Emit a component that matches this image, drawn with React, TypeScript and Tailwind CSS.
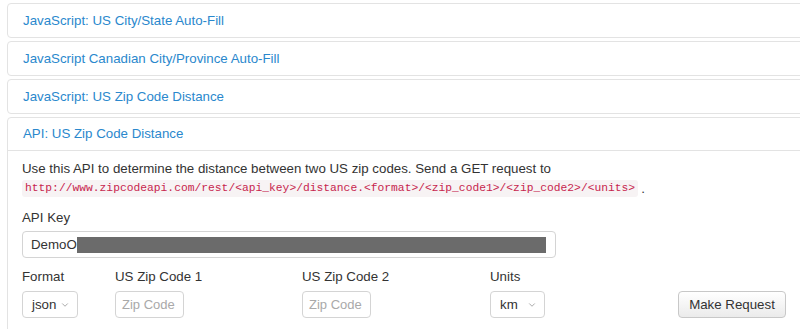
import { ChevronDown } from 'lucide-react'

const LINKS = [
  'JavaScript: US City/State Auto-Fill',
  'JavaScript Canadian City/Province Auto-Fill',
  'JavaScript: US Zip Code Distance',
]

function Select({ value, width }: { value: string; width: string }) {
  return (
    <div
      className={`flex h-[27px] items-center justify-between rounded-[4px] border border-[#d4d4d4] bg-white pl-[9px] pr-[7px] text-[13.3px] text-[#333] ${width}`}
    >
      <span>{value}</span>
      <ChevronDown size={10} strokeWidth={1.5} className="text-[#777]" />
    </div>
  )
}

function ZipInput() {
  return (
    <div className="flex h-[27px] w-[69px] items-center rounded-[4px] border border-[#d4d4d4] bg-white pl-[6px] text-[13px] text-[#a9a9a9]">
      Zip Code
    </div>
  )
}

export default function App() {
  return (
    <div className="h-[329px] w-[800px] overflow-hidden bg-white pl-[7px] pt-[3px] font-['Liberation_Sans',Arial,sans-serif]">
      <div className="w-[810px]">
        {LINKS.map((title) => (
          <div
            key={title}
            className="mb-[3px] flex h-[35px] items-center rounded-[4px] border border-[#e3e3e3] px-[15px] text-[13.3px] text-[#2a88cd]"
          >
            {title}
          </div>
        ))}

        <div className="rounded-[4px] border border-[#e3e3e3]">
          <div className="flex h-[33px] items-center border-b border-[#e3e3e3] px-[15px] text-[13.3px] text-[#2a88cd]">
            API: US Zip Code Distance
          </div>

          <div className="px-[14px] pb-[30px] pt-[9px] text-[13.3px] text-[#333]">
            <p className="leading-[18px]">
              Use this API to determine the distance between two US zip codes. Send a GET request to
            </p>
            <p className="mt-[2px] flex items-center leading-[17px]">
              <code className="rounded-[3px] bg-[#f7f3f4] px-[3px] font-['Liberation_Mono',monospace] text-[11.3px] text-[#c7254e]">
                http://www.zipcodeapi.com/rest/&lt;api_key&gt;/distance.&lt;format&gt;/&lt;zip_code1&gt;/&lt;zip_code2&gt;/&lt;units&gt;
              </code>
              <span className="ml-[3px]">.</span>
            </p>

            <label className="mt-[12px] block leading-[18px]">API Key</label>
            <div className="mt-[4px] flex h-[27px] w-[534px] items-center rounded-[4px] border border-[#d4d4d4] pl-[8px]">
              <span>DemoO</span>
              <div className="h-[16px] w-[469px] bg-[#6b6b6b]" />
            </div>

            <div className="mt-[10px] flex">
              <div className="w-[93px]">
                <div className="leading-[18px]">Format</div>
                <div className="mt-[5px]">
                  <Select value="json" width="w-[56px]" />
                </div>
              </div>
              <div className="w-[187px]">
                <div className="leading-[18px]">US Zip Code 1</div>
                <div className="mt-[5px]">
                  <ZipInput />
                </div>
              </div>
              <div className="w-[188px]">
                <div className="leading-[18px]">US Zip Code 2</div>
                <div className="mt-[5px]">
                  <ZipInput />
                </div>
              </div>
              <div className="w-[188px]">
                <div className="leading-[18px]">Units</div>
                <div className="mt-[5px]">
                  <Select value="km" width="w-[55px]" />
                </div>
              </div>
              <div className="pt-[23px]">
                <button className="h-[27px] w-[108px] rounded-[4px] border border-[#c8c8c8] bg-gradient-to-b from-white to-[#ebebeb] text-[13.3px] text-[#333]">
                  Make Request
                </button>
              </div>
            </div>
          </div>
        </div>
      </div>
    </div>
  )
}
